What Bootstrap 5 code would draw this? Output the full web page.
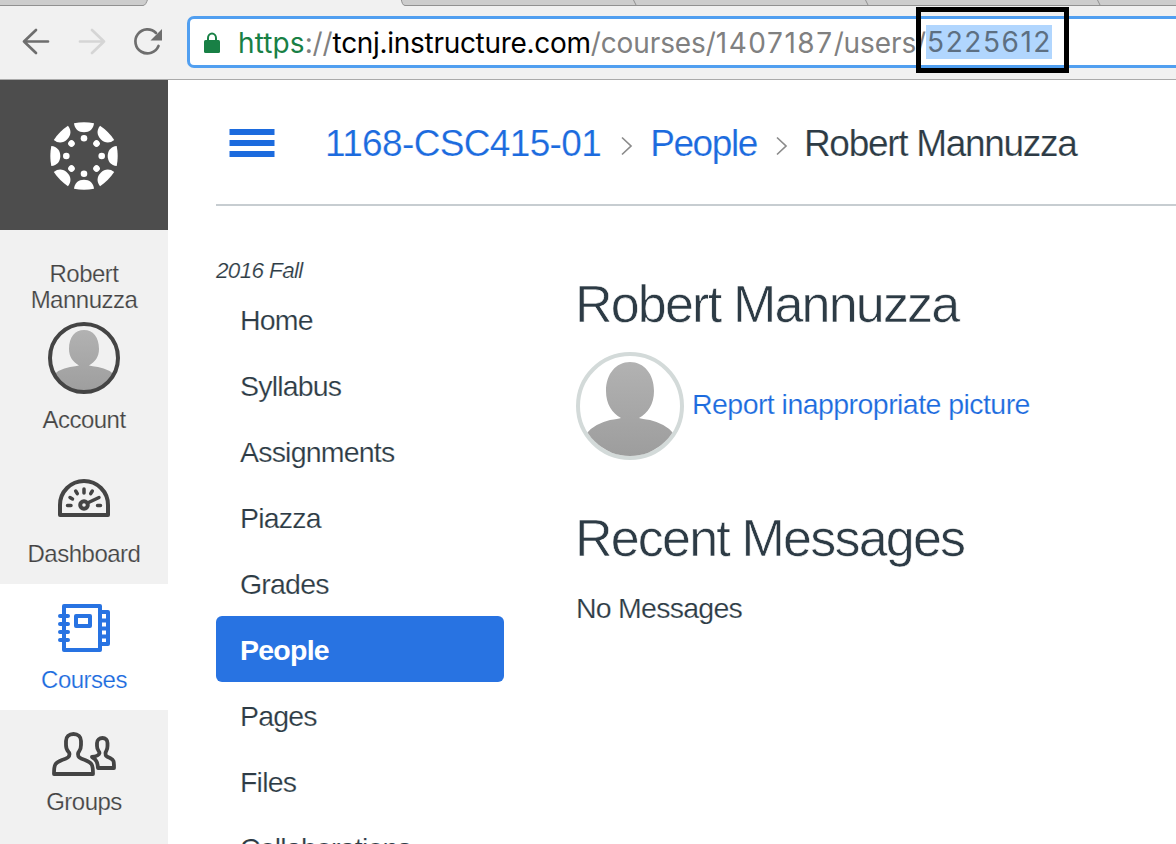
<!DOCTYPE html>
<html lang="en">
<head>
<meta charset="utf-8">
<title>Robert Mannuzza</title>
<meta name="viewport" content="width=device-width, initial-scale=1">
<link href="https://cdn.jsdelivr.net/npm/bootstrap@5.3.0/dist/css/bootstrap.min.css" rel="stylesheet">
<script src="https://cdn.jsdelivr.net/npm/bootstrap@5.3.0/dist/js/bootstrap.bundle.min.js"></script>
<style>
body{font-family:"Liberation Sans",Arial,sans-serif;color:#2d3b45;height:844px;overflow:hidden;background:#fff}
a{text-decoration:none;color:#1c6bde}
svg{display:block;flex:none}
.chrome{height:80px;background:#f1f1f1;border-bottom:1px solid #aaa}
.toolbar{height:73px;padding:10px 0 0 20px}
.address{margin-left:21px;height:52px;border:3px solid #519ff0;border-right:0;border-radius:7px 0 0 7px;background:#fff;padding:2px 0 0 13px;font:28px/44px Inter,sans-serif;color:#808080;white-space:pre}
.address svg{margin-right:16px}
.secure{color:#188045;letter-spacing:.1px}
.host{color:#000;letter-spacing:-.3px}
.route{letter-spacing:-.1px}
.digits{letter-spacing:1.550px}
.picked{background:#b1d6fe;color:#5d6f82;height:34px;line-height:35px;padding-left:1px;margin-top:-2px}
.callout-box{left:916px;top:7px;width:153px;height:66px;border:5px solid #000}
.rail{width:168px;height:764px;background:#f1f1f1;color:#444;font-size:24px;line-height:26px;letter-spacing:-.5px;text-align:center}
.rail-logo{height:150px;background:#4d4d4d}
.rail-item{color:#444;-webkit-text-stroke:.2px #f1f1f1}
.rail-item.current{background:#fff;color:#1c6bde;-webkit-text-stroke-color:#fff}
.main-pane{padding-left:48px;-webkit-text-stroke:.2px #fff}
.crumbs{height:126px;border-bottom:2px solid #c7cdd1;padding:2px 0 0 13px;font-size:37px;line-height:50px;white-space:nowrap}
.crumbs a,.crumbs span{padding-top:2px}
.course-menu{width:288px;padding-top:51px}
.term{font-size:22.5px;line-height:28px;letter-spacing:-.65px;margin-bottom:1px}
.course-menu .nav-link{height:66px;padding:1px 24px 0;font-size:28.5px;line-height:66px;color:#2d3b45;letter-spacing:-.8px;border-radius:6px}
.course-menu .nav-link.active{background:#2873e2;color:#fff;font-weight:700;letter-spacing:-.75px;-webkit-text-stroke:0}
.profile{padding:68px 0 0 71px;font-size:28.5px;white-space:nowrap}
.profile h1,.profile h2{font-size:52px;line-height:60px;font-weight:400;margin:0;letter-spacing:-1.8px;-webkit-text-stroke:.6px #fff}
.face{border:4px solid #d3dad9;width:108px;height:108px;margin-left:1px}
</style>
</head>
<body>
<header class="chrome position-relative">
  <svg width="1176" height="6"><rect width="1176" height="6" fill="#f1f1f1"/><path d="M-2-2H148Q146 5.500 143 5.500H-2ZM401-2Q402 5.500 405 5.500H1180V-2Z" fill="#cdcdcd" stroke="#919191"/><path d="M633-1L636 5M865-1L868 5M1097-1L1100 5" stroke="#919191"/></svg>
  <div class="toolbar d-flex">
    <div class="d-flex pt-2">
      <svg width="146" height="36" viewBox="20 24 146 36" fill="none" stroke-width="2.700" stroke-linecap="round" stroke-linejoin="round"><path d="M48 41.500H24M36 30L24 41.500L36 53" stroke="#6e6e6e"/><path d="M80 41.500H104M92 30L104 41.500L92 53" stroke="#d5d5d5"/><path d="M158.500 46A12 12 0 1 1 156 33" stroke="#6e6e6e"/><path d="M162 29V40.500H150.500Z" fill="#6e6e6e" stroke="none"/></svg>
    </div>
    <div class="address d-flex align-items-center flex-grow-1"><svg width="19" height="24" viewBox="0 0 19 24"><path d="M5 11V7a4 4.500 0 0 1 8 0v4" fill="none" stroke="#188045" stroke-width="2"/><rect x="1" y="9" width="16" height="13" rx="1.500" fill="#188045"/></svg><span class="secure">https</span><span class="route">://</span><span class="host">tcnj.instructure.com</span><span class="route">/courses/<span class="digits">1407187</span>/users/</span><span class="picked digits">5225612</span></div>
  </div>
  <div class="callout-box position-absolute"></div>
</header>
<div class="d-flex">
  <nav class="rail flex-shrink-0">
    <div class="rail-logo d-flex justify-content-center pt-1">
      <svg width="80" height="144" viewBox="-40 -72 80 144" fill="#fff"><defs><g id="petal"><path d="M-10-32.700Q0-34.700 10-32.700C9.500-27 5.500-23.700 0-23.700S-9.500-27-10-32.700Z"/><circle cy="-17.700" r="3.300"/></g></defs><use href="#petal"/><use href="#petal" transform="rotate(45)"/><use href="#petal" transform="rotate(90)"/><use href="#petal" transform="rotate(135)"/><use href="#petal" transform="rotate(180)"/><use href="#petal" transform="rotate(225)"/><use href="#petal" transform="rotate(270)"/><use href="#petal" transform="rotate(315)"/></svg>
    </div>
    <a class="rail-item d-flex flex-column align-items-center" href="#" style="height:228px;padding-top:31px">
      <span>Robert<br>Mannuzza</span>
      <svg class="mt-2 mb-2" width="72" height="74" viewBox="0 -1 72 74"><defs><linearGradient id="skin" x2="0" y2="1"><stop stop-color="#b2b2b2"/><stop offset="1" stop-color="#9d9d9d"/></linearGradient><clipPath id="round"><circle cx="36" cy="36" r="34"/></clipPath></defs><path clip-path="url(#round)" fill="url(#skin)" d="M36 8C27 8 21 15 21 27C21 35 25 40 31 43.500Q28 44 22 45Q10 47 4 55V72H68V55Q62 47 50 45Q44 44 41 43.500C47 40 51 35 51 27C51 15 45 8 36 8Z"/><circle cx="36" cy="36" r="34" fill="none" stroke="#444" stroke-width="4"/></svg>
      <span class="mt-1">Account</span>
    </a>
    <a class="rail-item d-flex flex-column align-items-center" href="#" style="height:126px;padding-top:19px">
      <svg width="64" height="42" viewBox="52 477 64 42" fill="none" stroke="#444" stroke-width="4" stroke-linecap="round" stroke-linejoin="round"><path d="M60 515V505A24 24 0 0 1 108 505V515Z"/><circle cx="84" cy="505" r="3.800"/><path d="M88.500 502.500L99 497.500M67.500 505.500H71M97.500 505.500H100.500M70 497.500L72.500 499M75.700 491L77.300 493.700M84 489V493M92.300 491L90.700 493.700" stroke-width="3.500"/></svg>
      <span style="margin-top:22px">Dashboard</span>
    </a>
    <a class="rail-item current d-flex flex-column align-items-center" href="#" style="height:126px;padding-top:18px">
      <svg width="64" height="52" viewBox="52 602 64 52" fill="none" stroke="#2873e2" stroke-width="4" stroke-linecap="round" stroke-linejoin="round"><path d="M64 606H100V650H64ZM76 616H90V626H76ZM100 612H108V644H100M102 620.500H107M102 628.500H107M102 636.500H107M60 616H68M60 624H68M60 632H68M60 640H68"/></svg>
      <span style="margin-top:13px">Courses</span>
    </a>
    <a class="rail-item d-flex flex-column align-items-center" href="#" style="padding-top:20px">
      <svg width="68" height="48" viewBox="50 730 68 48" fill="none" stroke="#444" stroke-width="3.800" stroke-linejoin="round"><path d="M54 774C54 764 55 763 62 760C68 758 69.500 757 69.500 754C69.500 751 66 752 66 745V741C66 737 69 734 73.500 734S81 737 81 741V745C81 752 78 751 78 754C78 757 79 758 85 760C92 763 93 764 93 774Z"/><path d="M98 768H114C114 761 114 760 110 758C106 756.500 105.500 756 105.500 753C105.500 751 107.500 751 107.500 746V743C107.500 740 105.500 738 102.500 738S97 740 97 743V746C97 751 99.500 751 99.500 753Q99 756 92 757C97 760 97.500 763 98 768Z"/></svg>
      <span style="margin-top:11px">Groups</span>
    </a>
  </nav>
  <main class="main-pane flex-grow-1">
    <div class="crumbs d-flex align-items-center">
      <svg width="46" height="28"><path d="M.5 3H45.500M.5 14H45.500M.5 25H45.500" stroke="#1c6bde" stroke-width="6"/></svg>
      <a href="#" style="margin-left:50px;letter-spacing:-.65px">1168-CSC415-01</a>
      <svg width="12" height="20" style="margin:6px 17px 0 20px"><path d="M1 1.500L10 10L1 18.500" fill="none" stroke="#8b8b8b" stroke-width="1.700"/></svg>
      <a href="#" style="letter-spacing:-1.400px">People</a>
      <svg width="12" height="20" style="margin:6px 16px 0 19px"><path d="M1 1.500L10 10L1 18.500" fill="none" stroke="#8b8b8b" stroke-width="1.700"/></svg>
      <span style="letter-spacing:-1.300px">Robert Mannuzza</span>
    </div>
    <div class="d-flex">
      <div class="course-menu flex-shrink-0">
        <div class="term fst-italic">2016 Fall</div>
        <nav class="nav flex-column">
          <a class="nav-link" href="#">Home</a>
          <a class="nav-link" href="#">Syllabus</a>
          <a class="nav-link" href="#">Assignments</a>
          <a class="nav-link" href="#">Piazza</a>
          <a class="nav-link" href="#">Grades</a>
          <a class="nav-link active" href="#">People</a>
          <a class="nav-link" href="#">Pages</a>
          <a class="nav-link" href="#">Files</a>
          <a class="nav-link" href="#">Collaborations</a>
        </nav>
      </div>
      <section class="profile">
        <h1>Robert Mannuzza</h1>
        <div class="d-flex align-items-center" style="margin-top:18px">
          <div class="face rounded-circle overflow-hidden flex-shrink-0"><svg width="100" height="100"><path fill="url(#skin)" d="M50 6C36 6 26 18 26 35C26 48 32 57 41 62Q38 63 30 64Q14 68 7 77V100H93V77Q86 68 70 64Q62 63 59 62C68 57 74 48 74 35C74 18 64 6 50 6Z"/></svg></div>
          <a class="ms-2 pb-1" href="#" style="letter-spacing:-.55px">Report inappropriate picture</a>
        </div>
        <h2 style="margin-top:48px">Recent Messages</h2>
        <p style="margin:19px 0 0 1px;letter-spacing:-.75px">No Messages</p>
      </section>
    </div>
  </main>
</div>
</body>
</html>
